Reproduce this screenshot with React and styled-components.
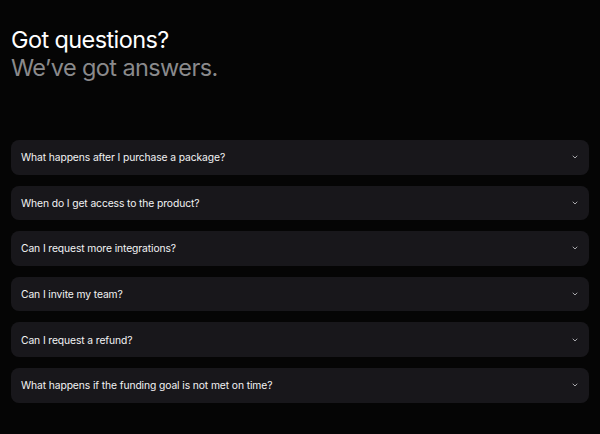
import styled, { createGlobalStyle } from "styled-components";

const questions = [
  "What happens after I purchase a package?",
  "When do I get access to the product?",
  "Can I request more integrations?",
  "Can I invite my team?",
  "Can I request a refund?",
  "What happens if the funding goal is not met on time?",
];

const GlobalStyle = createGlobalStyle`
  html, body {
    margin: 0;
    padding: 0;
    background: #050505;
  }
  body {
    font-family: Inter, "Noto Sans", sans-serif;
    -webkit-font-smoothing: antialiased;
  }
`;

const Chevron = () => (
  <svg width="8" height="8" viewBox="0 0 24 24" fill="none" stroke="currentColor" strokeWidth="3" strokeLinecap="round" strokeLinejoin="round">
    <path d="m6 9 6 6 6-6" />
  </svg>
);

const App = () => (
  <>
    <GlobalStyle />
    <StyledFaq>
      <Heading>
        Got questions?
        <span>We’ve got answers.</span>
      </Heading>
      <List>
        {questions.map((q, i) => (
          <Item key={i}>
            <p>{q}</p>
            <Chevron />
          </Item>
        ))}
      </List>
    </StyledFaq>
  </>
);

const StyledFaq = styled.section`
  display: flex;
  flex-direction: column;
  gap: 58px;
  padding: 26px 11px 32px;
  min-height: 434px;
  box-sizing: border-box;
  background: #050505;
`;

const Heading = styled.h2`
  margin: 0;
  font-size: 23.5px;
  font-weight: 400;
  line-height: 28px;
  letter-spacing: -0.6px;
  color: #ffffff;

  span {
    display: block;
    color: #8a8a8c;
  }
`;

const List = styled.div`
  display: flex;
  flex-direction: column;
  gap: 11px;
`;

const Item = styled.div`
  display: flex;
  align-items: center;
  justify-content: space-between;
  height: 34.6px;
  padding: 0 10px;
  border-radius: 8px;
  background: #18171b;
  color: #a6a6aa;

  p {
    margin: 0;
    font-size: 10.3px;
    font-weight: 400;
    color: #f2f2f4;
    letter-spacing: -0.1px;
  }
`;

export default App;
